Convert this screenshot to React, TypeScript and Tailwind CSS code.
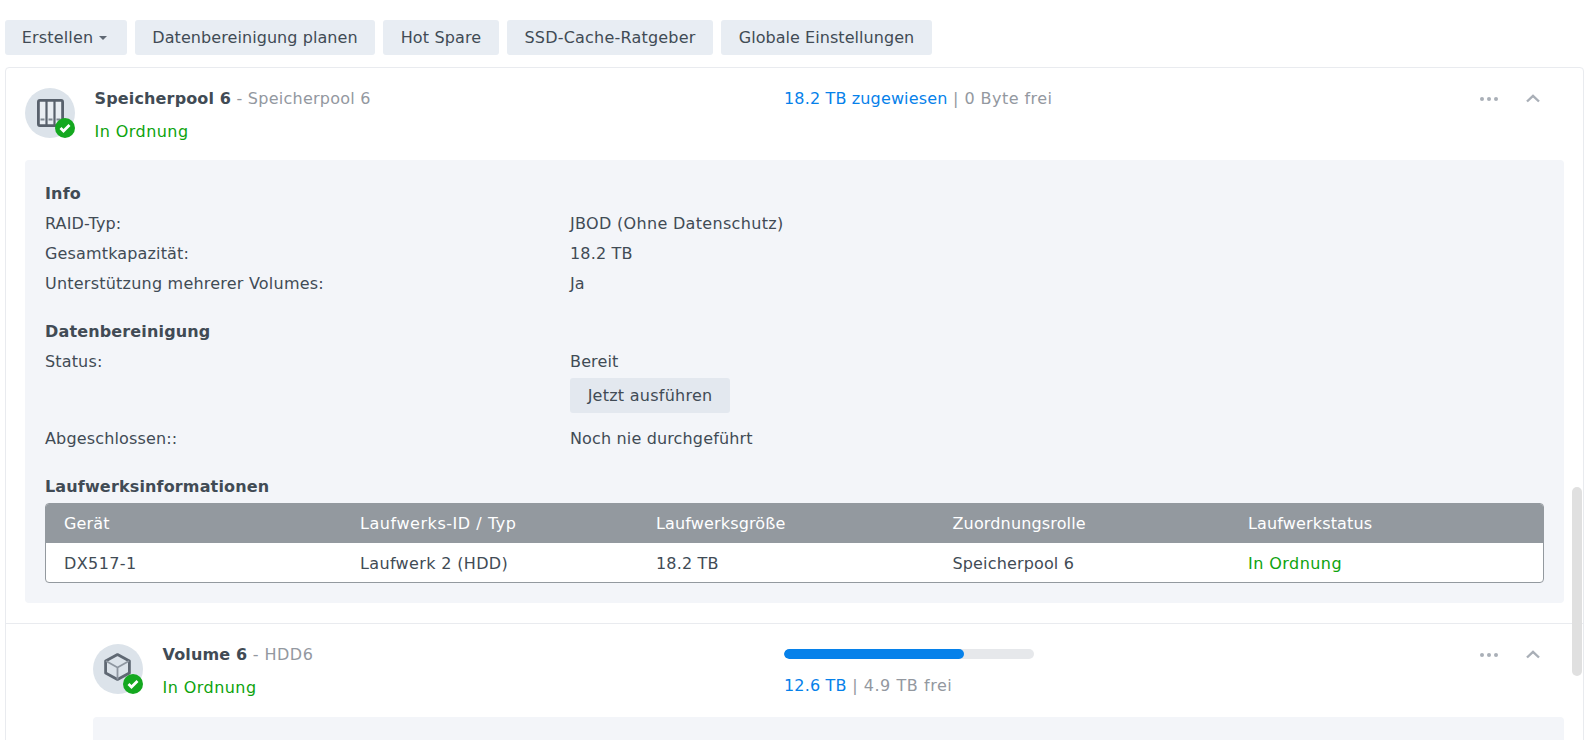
import React from "react";

function Avatar({ kind }: { kind: "pool" | "volume" }) {
  return (
    <div className="relative w-[50px] h-[50px] rounded-full bg-[#dce3ea] shrink-0 flex items-center justify-center">
      {kind === "pool" ? (
        <svg width="27" height="28" viewBox="0 0 27 28" fill="none">
          <rect x="1.4" y="1.4" width="24.2" height="25.2" rx="1.5" fill="#e9eef3" stroke="#58616c" strokeWidth="2.8" />
          <path d="M9.5 2v24M17.5 2v24" stroke="#58616c" strokeWidth="2.2" />
          <path d="M3.5 20.5h4M11.5 20.5h4M19.5 20.5h4" stroke="#7d858f" strokeWidth="2" />
        </svg>
      ) : (
        <svg width="27" height="28" viewBox="0 0 27 28" fill="none" className="mb-[4px] mr-[2px]">
          <path d="M13.5 1.6 25.4 8v12l-11.9 6.4L1.6 20V8z" stroke="#5f6873" strokeWidth="2.8" strokeLinejoin="round" />
          <path d="M2 8l11.5 6.5L25 8M13.5 14.5v12" stroke="#8e96a0" strokeWidth="1.8" />
        </svg>
      )}
      <div className="absolute right-0 bottom-0 w-5 h-5 rounded-full bg-[#14a81f] flex items-center justify-center">
        <svg width="12" height="10" viewBox="0 0 12 10" fill="none">
          <path d="M1.5 5 4.5 8 10.5 2" stroke="white" strokeWidth="2.8" />
        </svg>
      </div>
    </div>
  );
}

function Actions() {
  return (
    <div className="absolute top-[26px] right-[43px] flex items-center gap-[27px]">
      <svg width="20" height="6" viewBox="0 0 20 6" fill="#a9afb7">
        <circle cx="3" cy="3" r="2" />
        <circle cx="10" cy="3" r="2" />
        <circle cx="17" cy="3" r="2" />
      </svg>
      <svg width="14" height="9" viewBox="0 0 14 9" fill="none">
        <path d="M1 7.5 7 1.8l6 5.7" stroke="#a9afb7" strokeWidth="2.4" />
      </svg>
    </div>
  );
}

function Row({ label, value }: { label: React.ReactNode; value: React.ReactNode }) {
  return (
    <div className="flex h-[30px] items-center">
      <div className="w-[525px] shrink-0">{label}</div>
      <div>{value}</div>
    </div>
  );
}

const btn = "h-[35px] rounded-[3px] bg-[#e8edf3] text-[#414b55] flex items-center justify-center";
const ok = "text-[#0da30d] tracking-[0.45px]";
const cols = "grid grid-cols-[296px_296px_296.5px_295.5px_1fr] h-[39px] items-center pl-[18px]";

export default function App() {
  return (
    <div className="relative h-screen overflow-hidden bg-white pl-[5px] pt-5 text-[16px] tracking-[0.15px] text-[#414b55] font-['DejaVu_Sans','Liberation_Sans',sans-serif]">
      <div className="flex gap-2">
        <button className={`${btn} w-[122px] gap-[6px] pr-[3px]`}>
          Erstellen
          <span className="w-0 h-0 border-x-[4px] border-x-transparent border-t-[4px] border-t-[#5f6873] mt-[1px]" />
        </button>
        <button className={`${btn} w-[240px] tracking-[0.07px]`}>Datenbereinigung planen</button>
        <button className={`${btn} w-[116px]`}>Hot Spare</button>
        <button className={`${btn} w-[206px] tracking-[0.2px]`}>SSD-Cache-Ratgeber</button>
        <button className={`${btn} w-[211px] tracking-[0.05px]`}>Globale Einstellungen</button>
      </div>

      <div className="mt-3 w-[1579px] border border-[#e9ebef] rounded-[4px]">
        <div className="relative flex h-[92px] pl-[19px] pt-[20px]">
          <Avatar kind="pool" />
          <div className="ml-[19.5px]">
            <div className="h-[22px] leading-[22px]">
              <span className="font-bold">Speicherpool 6</span>
              <span className="text-[#93989f] tracking-[0.25px]"> - Speicherpool 6</span>
            </div>
            <div className={`mt-[11px] leading-[22px] ${ok}`}>In Ordnung</div>
          </div>
          <div className="absolute left-[778px] top-[20px] leading-[22px]">
            <span className="text-[#0681ea]">18.2 TB zugewiesen</span>
            <span className="text-[#93989f] tracking-[0.45px]"> | 0 Byte frei</span>
          </div>
          <Actions />
        </div>

        <div className="mx-[19px] h-[443px] rounded-[4px] bg-[#f3f5f9] px-5 pt-[19px]">
          <div className="font-bold leading-[30px] h-[30px]">Info</div>
          <Row label="RAID-Typ:" value={<span className="tracking-[0.32px]">JBOD (Ohne Datenschutz)</span>} />
          <Row label="Gesamtkapazität:" value="18.2 TB" />
          <Row label={<span className="tracking-[0.22px]">Unterstützung mehrerer Volumes:</span>} value="Ja" />
          <div className="font-bold h-[30px] leading-[30px] mt-[18px]">Datenbereinigung</div>
          <Row label="Status:" value="Bereit" />
          <div className="pl-[525px] mt-[1px]">
            <button className="h-[35px] w-[160px] rounded-[3px] bg-[#e3e8ef] text-[#414b55] tracking-[0.25px]">Jetzt ausführen</button>
          </div>
          <div className="mt-[11px]">
            <Row label="Abgeschlossen::" value="Noch nie durchgeführt" />
          </div>
          <div className="font-bold h-[30px] leading-[30px] mt-[18px] mb-[1px]">Laufwerksinformationen</div>
          <div className="rounded-[4px] border border-[#93999f] overflow-hidden bg-white">
            <div className={`${cols} bg-[#93999f] text-white`}>
              <div>Gerät</div>
              <div className="tracking-[0.55px]">Laufwerks-ID / Typ</div>
              <div>Laufwerksgröße</div>
              <div>Zuordnungsrolle</div>
              <div>Laufwerkstatus</div>
            </div>
            <div className={`${cols} pt-[2px]`}>
              <div className="tracking-[0.4px]">DX517-1</div>
              <div className="tracking-[0.35px]">Laufwerk 2 (HDD)</div>
              <div>18.2 TB</div>
              <div>Speicherpool 6</div>
              <div className={ok}>In Ordnung</div>
            </div>
          </div>
        </div>

        <div className="mt-5 border-t border-[#e9ebef]">
          <div className="relative flex pl-[87px] pt-[20px] h-[93px]">
            <Avatar kind="volume" />
            <div className="ml-[19.5px]">
              <div className="h-[22px] leading-[22px]">
                <span className="font-bold">Volume 6</span>
                <span className="text-[#93989f] tracking-[0.45px]"> - HDD6</span>
              </div>
              <div className={`mt-[11px] leading-[22px] ${ok}`}>In Ordnung</div>
            </div>
            <div className="absolute left-[778px] top-[25px] w-[250px]">
              <div className="h-[10px] rounded-full bg-[#e6e8eb] overflow-hidden">
                <div className="h-full w-[72%] rounded-full bg-[#0681ea]" />
              </div>
              <div className="mt-[16px] leading-[22px] whitespace-nowrap">
                <span className="text-[#0681ea]">12.6 TB</span>
                <span className="text-[#93989f] tracking-[0.55px]"> | 4.9 TB frei</span>
              </div>
            </div>
            <Actions />
          </div>
          <div className="ml-[87px] mr-[19px] h-[40px] rounded-[4px] bg-[#f3f5f9]" />
        </div>
      </div>

      <div className="absolute left-[1572px] top-[487px] w-[10px] h-[189px] rounded-[5px] bg-[#e0e0e0]" />
    </div>
  );
}
